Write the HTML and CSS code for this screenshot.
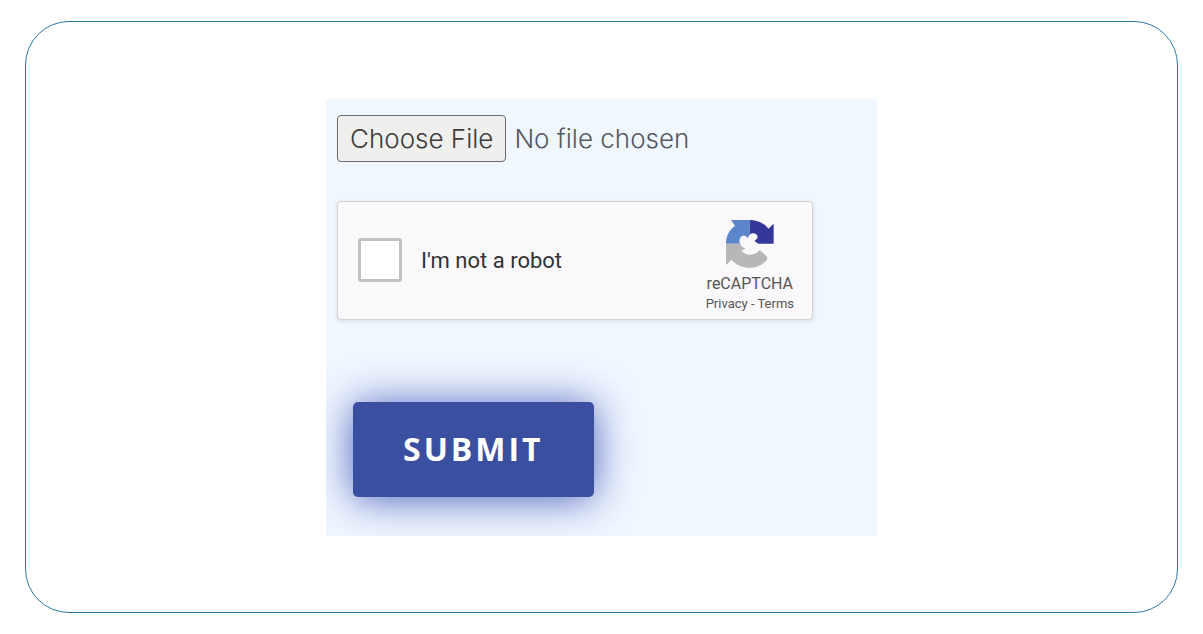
FILE: index.html
```
<!DOCTYPE html>
<html lang="en">
<head>
    <meta charset="UTF-8">
    <meta name="viewport" content="width=device-width, initial-scale=1.0">
    <title>Upload</title>
    <link rel="stylesheet" href="styles.css">
</head>
<body>
    <main class="frame">
        <form class="upload-form">
            <input class="file-input" type="file" name="file" aria-label="File">

            <div class="captcha">
                <label class="captcha-check">
                    <input type="checkbox" name="robot">
                    <span>I'm not a robot</span>
                </label>
                <div class="captcha-brand">
                    <svg class="captcha-logo" viewBox="0 0 144 144" aria-hidden="true">
                        <path fill="#5b86cc" d="M71 0H15l12 17C10 30 0 48 0 71h42c-3-8-2-16 3-21 5-4 10-5 14-2l5 6 7-8z"/>
                        <path fill="#36379b" d="M71 0v44c4-4 12-6 18-2 6 3 7 10 4 14l-8 7 12 8h46V11l-16 15C115 10 95 0 71 0z"/>
                        <path fill="#b7b7b8" d="M0 71v64l17-16c14 16 32 24 54 24 22 0 40-9 53-25l-1-8-22-20c-7 9-17 14-29 14-10 0-19-4-25-12l13-8c-8 0-15-5-18-13z"/>
                    </svg>
                    <div class="captcha-name">reCAPTCHA</div>
                    <div class="captcha-links"><a href="#">Privacy</a> - <a href="#">Terms</a></div>
                </div>
            </div>

            <button class="submit-btn" type="submit">SUBMIT</button>
        </form>
    </main>
</body>
</html>
```

FILE: styles.css
```
* {
    box-sizing: border-box;
}

body {
    margin: 0;
    padding: 21px 25px;
    min-height: 100vh;
    display: flex;
    background: #fff;
    font-family: Roboto, "Liberation Sans", sans-serif;
}

.frame {
    flex: 1;
    display: flex;
    align-items: center;
    justify-content: center;
    border: 1px solid #2a7ba3;
    border-radius: 44px;
}

.upload-form {
    width: 100%;
    max-width: 551px;
    padding: 16px 64px 39px 11px;
    background: #f0f7ff;
    overflow: hidden;
}

.file-input {
    display: block;
    width: 100%;
    font-family: Inter, sans-serif;
    font-size: 26px;
    font-weight: 300;
    color: #55595f;
}

.file-input::file-selector-button {
    height: 47px;
    margin: 0 8px 0 0;
    padding: 0 12px;
    border: 1px solid #6b6b6b;
    border-radius: 4px;
    background: #efefed;
    font: inherit;
    color: #3c3c3c;
}

.captcha {
    display: flex;
    align-items: center;
    justify-content: space-between;
    margin-top: 39px;
    padding: 0 18px 0 20px;
    border: 1px solid #d3d3d3;
    border-radius: 4px;
    background: #faf8fa;
    box-shadow: 0 1px 4px rgba(0, 0, 0, 0.12);
}

.captcha-check {
    display: flex;
    align-items: center;
    gap: 19px;
    font-size: 22px;
    color: #333;
}

.captcha-check input {
    appearance: none;
    width: 44px;
    height: 44px;
    margin: 0;
    border: 3px solid #c1c1c1;
    border-radius: 3px;
    background: #fff;
}

.captcha-brand {
    padding: 18px 0 5px;
    text-align: center;
    color: #555;
}

.captcha-logo {
    display: block;
    width: 48px;
    height: 48px;
    margin: 0 auto 6px;
}

.captcha-name {
    font-size: 16px;
    line-height: 20px;
}

.captcha-links {
    font-size: 13px;
    line-height: 20px;
}

.captcha-links a {
    color: inherit;
    text-decoration: none;
}

.submit-btn {
    display: block;
    margin: 82px 0 0 16px;
    padding: 24px 50px 26px;
    border: 0;
    border-radius: 5px;
    background: #3a4f9f;
    box-shadow: 0 2px 40px rgba(58, 79, 180, 0.9);
    font-family: "Open Sans", sans-serif;
    font-size: 32px;
    font-weight: 700;
    line-height: 45px;
    letter-spacing: 3px;
    color: #fff;
}
```
